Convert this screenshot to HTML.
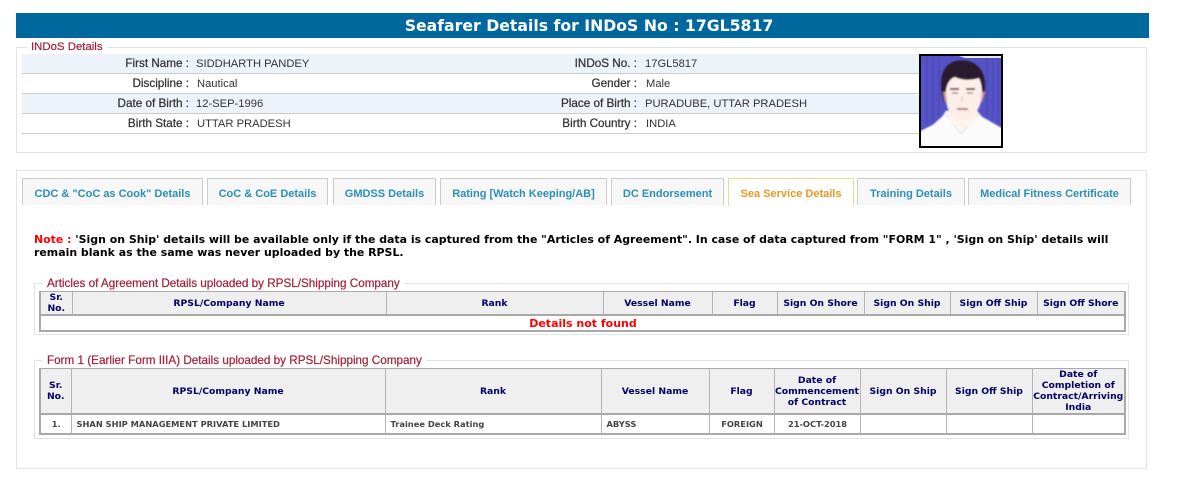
<!DOCTYPE html>
<html><head><meta charset="utf-8"><style>
html,body{margin:0;padding:0;background:#fff;width:1191px;height:495px;overflow:hidden}
body{position:relative;font-family:"Liberation Sans",Arial,sans-serif}
.a{position:absolute}
.hd{left:16px;top:13px;width:1133px;height:25px;box-sizing:border-box;padding-left:13px;background:#00689c;color:#fff;font:bold 15.7px/26px "DejaVu Sans",Verdana,sans-serif;text-align:center}
.box{border:1px solid #e3e3e3;box-sizing:border-box}
.leg{background:#fff;color:#a31d36;font-size:11.7px;line-height:12px;padding:0 4px;white-space:nowrap;-webkit-text-stroke:.2px #a31d36}
.row{left:22px;width:897px;height:19px;border-bottom:1px solid #ccc;font-size:11.2px;line-height:19px;color:#333}
.row.o{background:#edf3fb}
.l{position:absolute;text-align:right;white-space:nowrap;font-size:11.7px;-webkit-text-stroke:.25px #333;top:0;line-height:19px}
.l1{left:0;width:167px}.l2{left:340px;width:275px}
.v{position:absolute;white-space:nowrap;top:1px;line-height:19px}
.tab{top:178px;height:27px;box-sizing:border-box;background:#f7f7f7;border:1px solid #ccc;border-bottom:0;color:#2a8fb9;font-size:11px;font-weight:bold;line-height:31px;text-align:center;white-space:nowrap}
.tab.on{background:#fff;border-color:#f3d98a;color:#e8981f;height:28px}
.note{left:34px;top:233px;width:1090px;font:bold 10.95px/13px "DejaVu Sans",Verdana,sans-serif;color:#000}
.note b{color:#f00}
table{position:absolute;border-collapse:collapse;table-layout:fixed;font-family:"DejaVu Sans",Verdana,sans-serif;border:2px solid #a9a9a9;border-top:1px solid #a9a9a9}
th{background:#efefef;color:#000066;font-size:9.25px;line-height:11px;padding:0;font-weight:bold;border:1px solid #b4b4b4;border-top:1px solid #a9a9a9;border-bottom:2px solid #a9a9a9;text-align:center}
td{font-size:8.3px;font-weight:bold;color:#444;padding:0 4px 0 5px;border:1px solid #b4b4b4;border-bottom:2px solid #a9a9a9;white-space:nowrap}
</style></head><body>
<div class="a hd">Seafarer Details for INDoS No : 17GL5817</div>

<div class="a box" style="left:16px;top:47px;width:1131px;height:106px"></div>
<div class="a leg" style="left:27px;top:41px;font-size:11.4px">INDoS Details</div>
<div class="a row o" style="top:54px"><span class="l l1">First Name :</span><span class="v" style="left:174px">SIDDHARTH PANDEY</span><span class="l l2">INDoS No. :</span><span class="v" style="left:623px">17GL5817</span></div>
<div class="a row" style="top:74px"><span class="l l1">Discipline :</span><span class="v" style="left:175px">Nautical</span><span class="l l2">Gender :</span><span class="v" style="left:624px">Male</span></div>
<div class="a row o" style="top:94px"><span class="l l1">Date of Birth :</span><span class="v" style="left:174px">12-SEP-1996</span><span class="l l2">Place of Birth :</span><span class="v" style="left:623px">PURADUBE, UTTAR PRADESH</span></div>
<div class="a row" style="top:114px"><span class="l l1">Birth State :</span><span class="v" style="left:175px">UTTAR PRADESH</span><span class="l l2">Birth Country :</span><span class="v" style="left:624px">INDIA</span></div>

<svg class="a" style="left:919px;top:54px" width="84" height="94" viewBox="0 0 84 94">
<defs><filter id="b" x="-5%" y="-5%" width="110%" height="110%"><feGaussianBlur stdDeviation="0.9"/></filter></defs>
<rect width="84" height="94" fill="#000"/>
<svg x="2" y="2" width="80" height="90" viewBox="2 2 80 90">
<g filter="url(#b)">
<rect x="0" y="0" width="84" height="94" fill="#5753c6"/>
<path d="M8 2V70M14 2V68M20 2V64M68 2V60M74 2V66M79 2V70" stroke="#4a48b8" stroke-width="2" opacity=".7"/>
<path d="M0 78 L14 71 L24 62 L27 57 L58 57 L63 63 L84 75 V94 H0Z" fill="#fbfbfb"/>
<path d="M22 36 C20 14 30 6 43 6 C58 6 68 17 66 36 L63 48 L25 48Z" fill="#2b1c2e"/>
<path d="M27 36 C29 26 33 24 36 23 C44 27 54 26 60 24 C62 28 63 34 63 38 C63 50 57 61 50 66 C45 69 40 69 35 65 C29 59 26 46 27 36Z" fill="#fdeee9"/>
<path d="M24 38 L27 38 L28 48 L26 48Z M63 38 L66 38 L63 48 L62 48Z" fill="#d79a90"/>
<path d="M31 35h9M47 35h9" stroke="#5a3a38" stroke-width="1.8"/>
<path d="M33 39h6M48 39h6" stroke="#a58a86" stroke-width="1.5"/>
<path d="M43 42v6" stroke="#e8c8c0" stroke-width="1.5"/>
<path d="M38 55h11" stroke="#b87878" stroke-width="2"/>
<path d="M27 60 L42 80 L60 60" stroke="#dcdcd6" stroke-width="1" fill="none"/>
<path d="M28 58 C34 68 52 70 58 58 L56 68 L43 76 L31 68Z" fill="#fff4ee"/>
</g>
<path d="M40 2H82V4H46Z" fill="#e8e8f5"/>
</svg>
</svg>

<div class="a box" style="left:16px;top:170px;width:1131px;height:299px"></div>
<div class="a tab" style="left:22px;width:181px">CDC &amp; "CoC as Cook" Details</div>
<div class="a tab" style="left:207px;width:121px">CoC &amp; CoE Details</div>
<div class="a tab" style="left:333px;width:103px">GMDSS Details</div>
<div class="a tab" style="left:440px;width:167px">Rating [Watch Keeping/AB]</div>
<div class="a tab" style="left:611px;width:113px">DC Endorsement</div>
<div class="a tab on" style="left:728px;width:126px">Sea Service Details</div>
<div class="a tab" style="left:857px;width:108px">Training Details</div>
<div class="a tab" style="left:968px;width:163px">Medical Fitness Certificate</div>

<div class="a note"><b>Note :</b> 'Sign on Ship' details will be available only if the data is captured from the "Articles of Agreement". In case of data captured from "FORM 1" , 'Sign on Ship' details will remain blank as the same was never uploaded by the RPSL.</div>

<div class="a box" style="left:34px;top:283px;width:1095px;height:52px"></div>
<div class="a leg" style="left:43px;top:278px">Articles of Agreement Details uploaded by RPSL/Shipping Company</div>
<table style="left:39px;top:291px;width:1085px;height:39px">
<colgroup><col style="width:32px"><col style="width:314px"><col style="width:217px"><col style="width:109px"><col style="width:65px"><col style="width:87px"><col style="width:86px"><col style="width:87px"><col style="width:88px"></colgroup>
<tr style="height:23px"><th>Sr.<br>No.</th><th>RPSL/Company Name</th><th>Rank</th><th>Vessel Name</th><th>Flag</th><th>Sign On Shore</th><th>Sign On Ship</th><th>Sign Off Ship</th><th>Sign Off Shore</th></tr>
<tr style="height:16px"><td colspan="9" style="text-align:center;color:#f00;font-size:11px;line-height:13px">Details not found</td></tr>
</table>

<div class="a box" style="left:34px;top:360px;width:1095px;height:79px"></div>
<div class="a leg" style="left:43px;top:355px">Form 1 (Earlier Form IIIA) Details uploaded by RPSL/Shipping Company</div>
<table style="left:39px;top:368px;width:1085px;height:65px">
<colgroup><col style="width:31px"><col style="width:314px"><col style="width:216px"><col style="width:108px"><col style="width:65px"><col style="width:86px"><col style="width:86px"><col style="width:86px"><col style="width:93px"></colgroup>
<tr style="height:45px"><th>Sr.<br>No.</th><th>RPSL/Company Name</th><th>Rank</th><th>Vessel Name</th><th>Flag</th><th>Date of<br>Commencement<br>of Contract</th><th>Sign On Ship</th><th>Sign Off Ship</th><th>Date of<br>Completion of<br>Contract/Arriving<br>India</th></tr>
<tr style="height:20px"><td style="text-align:center">1.</td><td>SHAN SHIP MANAGEMENT PRIVATE LIMITED</td><td>Trainee Deck Rating</td><td>ABYSS</td><td style="text-align:center">FOREIGN</td><td style="text-align:center">21-OCT-2018</td><td></td><td></td><td></td></tr>
</table>
</body></html>
